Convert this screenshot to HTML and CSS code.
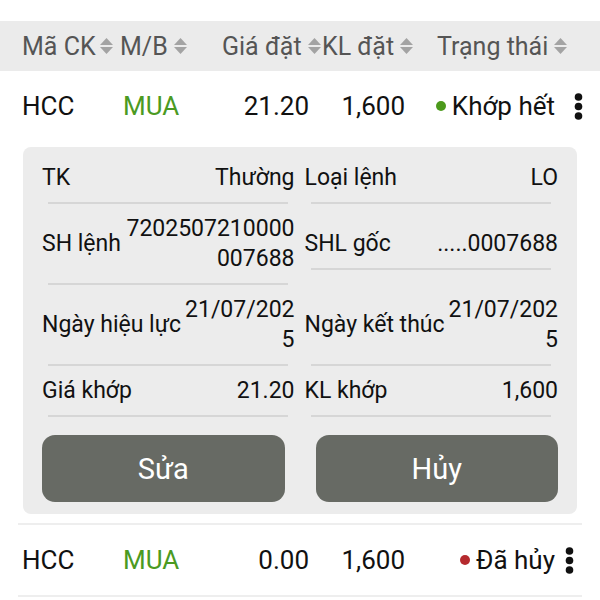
FILE: index.html
```html
<!DOCTYPE html>
<html lang="vi">
<head>
    <meta charset="UTF-8">
    <meta name="viewport" content="width=device-width, initial-scale=1.0">
    <title>Sổ lệnh</title>
    <link rel="stylesheet" href="styles.css">
</head>
<body>
    <div class="order-book">
        <div class="table-head">
            <div class="head-cell col-code">Mã CK <svg class="sort" viewBox="0 0 13 20"><polygon points="0,9 6.5,2 13,9"/><polygon points="0,11 6.5,18 13,11"/></svg></div>
            <div class="head-cell col-side">M/B <svg class="sort" viewBox="0 0 13 20"><polygon points="0,9 6.5,2 13,9"/><polygon points="0,11 6.5,18 13,11"/></svg></div>
            <div class="head-cell col-price">Giá đặt <svg class="sort" viewBox="0 0 13 20"><polygon points="0,9 6.5,2 13,9"/><polygon points="0,11 6.5,18 13,11"/></svg></div>
            <div class="head-cell col-qty">KL đặt <svg class="sort" viewBox="0 0 13 20"><polygon points="0,9 6.5,2 13,9"/><polygon points="0,11 6.5,18 13,11"/></svg></div>
            <div class="head-cell col-status">Trạng thái <svg class="sort" viewBox="0 0 13 20"><polygon points="0,9 6.5,2 13,9"/><polygon points="0,11 6.5,18 13,11"/></svg></div>
        </div>

        <div class="order-row">
            <span class="code">HCC</span>
            <span class="side buy">MUA</span>
            <span class="num">21.20</span>
            <span class="num">1,600</span>
            <span class="status"><i class="dot done"></i>Khớp hết</span>
            <span class="more"><svg viewBox="0 0 9 27"><circle cx="4.5" cy="4" r="3.8"/><circle cx="4.5" cy="13.5" r="3.8"/><circle cx="4.5" cy="23" r="3.8"/></svg></span>
        </div>

        <div class="detail-card">
            <div class="detail-grid">
                <div class="detail-cell">
                    <span class="label">TK</span>
                    <span class="value">Thường</span>
                </div>
                <div class="detail-cell">
                    <span class="label">Loại lệnh</span>
                    <span class="value">LO</span>
                </div>
                <div class="detail-cell">
                    <span class="label">SH lệnh</span>
                    <span class="value">7202507210000<br>007688</span>
                </div>
                <div class="detail-cell">
                    <span class="label">SHL gốc</span>
                    <span class="value">.....0007688</span>
                </div>
                <div class="detail-cell">
                    <span class="label">Ngày hiệu lực</span>
                    <span class="value">21/07/202<br>5</span>
                </div>
                <div class="detail-cell">
                    <span class="label">Ngày kết thúc</span>
                    <span class="value">21/07/202<br>5</span>
                </div>
                <div class="detail-cell">
                    <span class="label">Giá khớp</span>
                    <span class="value">21.20</span>
                </div>
                <div class="detail-cell">
                    <span class="label">KL khớp</span>
                    <span class="value">1,600</span>
                </div>
            </div>
            <div class="actions">
                <button class="action-btn">Sửa</button>
                <button class="action-btn">Hủy</button>
            </div>
        </div>

        <div class="order-row bordered">
            <span class="code">HCC</span>
            <span class="side buy">MUA</span>
            <span class="num">0.00</span>
            <span class="num">1,600</span>
            <span class="status"><i class="dot cancelled"></i>Đã hủy</span>
            <span class="more"><svg viewBox="0 0 9 27"><circle cx="4.5" cy="4" r="3.8"/><circle cx="4.5" cy="13.5" r="3.8"/><circle cx="4.5" cy="23" r="3.8"/></svg></span>
        </div>
    </div>
</body>
</html>
```

FILE: styles.css
```css
* {
    margin: 0;
    padding: 0;
    box-sizing: border-box;
    font-family: Roboto, "Noto Sans", sans-serif;
}

body {
    background: #fff;
    color: #111;
}

.order-book {
    padding-top: 21px;
}

/* header */
.table-head {
    height: 50px;
    background: #ebebeb;
    display: flex;
    align-items: center;
    padding-left: 22px;
    font-size: 25px;
    color: #555;
}

.head-cell {
    display: flex;
    align-items: center;
    gap: 6px;
    white-space: nowrap;
}

.sort {
    width: 13px;
    height: 20px;
    fill: #a3a3a3;
    flex-shrink: 0;
}

.col-code { width: 98px; gap: 4px; }
.col-side { width: 102px; }
.col-price { width: 100px; }
.col-qty { width: 115px; }

/* rows */
.order-row {
    height: 70px;
    display: grid;
    grid-template-columns: 101px 80px 108px 96px 150px 1fr;
    align-items: center;
    padding-left: 22px;
    font-size: 26px;
}

.order-row.bordered {
    margin: 9px 18px 0;
    padding-left: 4px;
    height: 74px;
    border-top: 2px solid #eeeeee;
    border-bottom: 2px solid #eeeeee;
}

.side.buy {
    color: #4b9a22;
}

.num {
    text-align: right;
    padding-right: 2px;
}

.status {
    display: flex;
    align-items: center;
    justify-content: flex-end;
    gap: 6px;
    padding-right: 2px;
}

.dot {
    width: 10px;
    height: 10px;
    border-radius: 50%;
}

.dot.done { background: #4c9a1c; }
.dot.cancelled { background: #b52a2e; }

.more {
    display: flex;
    justify-content: center;
}

.more svg {
    width: 9px;
    height: 27px;
    fill: #111;
}

/* expanded detail */
.detail-card {
    margin: 6px 23px 0;
    background: #ececec;
    border-radius: 8px;
    padding: 6px 19px 12px;
}

.detail-grid {
    display: grid;
    grid-template-columns: 1fr 1fr;
    column-gap: 10px;
    align-items: center;
}

.detail-cell {
    display: flex;
    align-items: center;
    justify-content: space-between;
    gap: 4px;
    padding: 10px 0 11px;
    font-size: 23px;
    line-height: 30px;
    position: relative;
}

.detail-cell::after {
    content: "";
    position: absolute;
    left: 6px;
    right: 7px;
    bottom: 0;
    height: 2px;
    background: #d6d6d6;
}

.label {
    white-space: nowrap;
}

.value {
    text-align: right;
}

.actions {
    display: flex;
    gap: 31px;
    margin-top: 18px;
}

.action-btn {
    flex: 1;
    height: 67px;
    border: none;
    border-radius: 13px;
    background: #676a64;
    color: #fff;
    font-size: 29px;
    cursor: pointer;
}
```
